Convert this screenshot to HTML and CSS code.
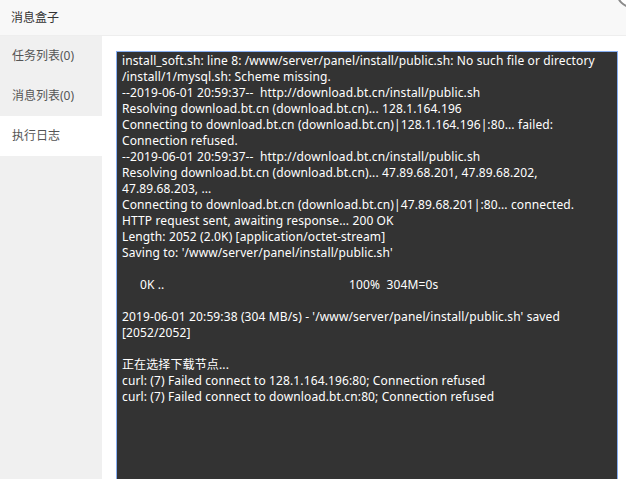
FILE: index.html
```html
<!DOCTYPE html>
<html lang="en">
  <head>
    <meta charset="UTF-8" />
    <meta name="viewport" content="width=device-width, initial-scale=1.0" />
    <title>消息盒子</title>
    <link rel="stylesheet" href="styles.css">
  </head>
  <body>
    <div class="layer">
      <div class="layer-title">消息盒子</div>
      <span class="layer-close"></span>
      <div class="layer-body">
        <ul class="tab-menu">
          <li>任务列表(0)</li>
          <li>消息列表(0)</li>
          <li class="active">执行日志</li>
        </ul>
        <div class="tab-content">
          <div class="log-box" id="exec-log">install_soft.sh: line 8: /www/server/panel/install/public.sh: No such file or directory
/install/1/mysql.sh: Scheme missing.
--2019-06-01 20:59:37--  http://download.bt.cn/install/public.sh
Resolving download.bt.cn (download.bt.cn)... 128.1.164.196
Connecting to download.bt.cn (download.bt.cn)|128.1.164.196|:80... failed:
Connection refused.
--2019-06-01 20:59:37--  http://download.bt.cn/install/public.sh
Resolving download.bt.cn (download.bt.cn)... 47.89.68.201, 47.89.68.202,
47.89.68.203, ...
Connecting to download.bt.cn (download.bt.cn)|47.89.68.201|:80... connected.
HTTP request sent, awaiting response... 200 OK
Length: 2052 (2.0K) [application/octet-stream]
Saving to: '/www/server/panel/install/public.sh'

<span class="indent">0K ..</span><span class="progress">100%  304M=0s</span>

2019-06-01 20:59:38 (304 MB/s) - '/www/server/panel/install/public.sh' saved
[2052/2052]

正在选择下载节点...
curl: (7) Failed connect to 128.1.164.196:80; Connection refused
curl: (7) Failed connect to download.bt.cn:80; Connection refused</div>
        </div>
      </div>
    </div>
  </body>
</html>
```

FILE: styles.css
```css
body {
  margin: 0;
  padding: 0;
  font-family: "Noto Sans", "Noto Sans CJK SC", sans-serif;
  background-color: #fff;
  width: 626px;
  height: 479px;
  overflow: hidden;
}

.layer {
  position: relative;
  height: 100%;
  overflow: hidden;
}

.layer-title {
  height: 35px;
  line-height: 35px;
  padding-left: 11px;
  font-size: 12px;
  color: #333;
  background-color: #f8f8f8;
  border-bottom: 1px solid #eee;
}

.layer-close {
  position: absolute;
  top: -24px;
  right: -22px;
  width: 28px;
  height: 28px;
  border-radius: 50%;
  border: 2px solid #8a8a8a;
  background-color: #fff;
}

.layer-body {
  display: flex;
  height: calc(100% - 36px);
}

.tab-menu {
  list-style: none;
  margin: 0;
  padding: 0;
  width: 102px;
  flex-shrink: 0;
  background-color: #f0f0f0;
}

.tab-menu li {
  height: 40px;
  line-height: 40px;
  padding-left: 12px;
  font-size: 12px;
  color: #555;
}

.tab-menu li.active {
  background-color: #fff;
}

.tab-content {
  flex: 1;
  padding: 15px 0 0 14px;
  overflow: hidden;
}

.log-box {
  box-sizing: border-box;
  width: 502px;
  height: 440px;
  padding: 1px 5px;
  border: 1px solid #86aef2;
  background-color: #333;
  color: #fff;
  font-size: 12px;
  line-height: 16px;
  letter-spacing: 0.12px;
  white-space: pre;
  overflow: hidden;
}

.indent {
  display: inline-block;
  padding-left: 18px;
  width: 209px;
}
```
